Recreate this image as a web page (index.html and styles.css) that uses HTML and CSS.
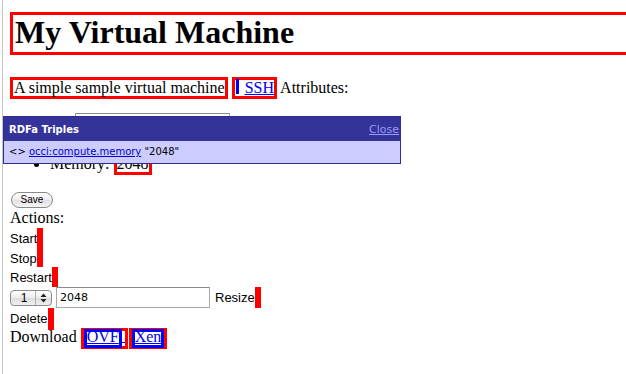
FILE: index.html
```html
<!DOCTYPE html>
<html lang="en">
<head>
<meta charset="utf-8">
<title>My Virtual Machine</title>
<link rel="stylesheet" href="styles.css">
</head>
<body>
<h1 class="title">My Virtual Machine</h1>
<div class="summary"><span class="box desc">A simple sample virtual machine</span> <span class="box ssh"><span class="rel-bar"></span><a href="#" class="link">SSH</a></span> Attributes:</div>
<ul class="attrs">
  <li class="input-row"><input class="text-input" type="text" value=""></li>
  <li class="mem">Memory: <span class="box mem-val">2048</span></li>
</ul>
<button class="save" type="button">Save</button>
<div class="actions-label">Actions:</div>
<div class="action"><span class="action-label">Start</span><span class="bar"></span></div>
<div class="action"><span class="action-label">Stop</span><span class="bar"></span></div>
<div class="action"><span class="action-label">Restart</span><span class="bar"></span></div>
<div class="action resize-row">
  <span class="select"><span class="select-val">1</span><span class="select-arrows"><svg width="7" height="10" viewBox="0 0 7 10"><path d="M3.5 0.5 L6.5 4 L0.5 4 Z" fill="#222"/><path d="M0.5 6 L6.5 6 L3.5 9.5 Z" fill="#222"/></svg></span></span>
  <input class="size-input" type="text" value="2048">
  <span class="action-label resize-label">Resize</span><span class="bar"></span>
</div>
<div class="action delete-row"><span class="action-label">Delete</span><span class="bar"></span></div>
<div class="download">Download <span class="box dl"><a href="#" class="rel-link">OVF</a><span class="trail"></span></span><span class="box dl xen"><a href="#" class="rel-link">Xen</a></span></div>

<div class="rdfa">
  <div class="rdfa-head"><span>RDFa Triples</span><a href="#" class="rdfa-close">Close</a></div>
  <div class="rdfa-body">&lt;&gt; <a href="#" class="rdfa-link">occi:compute.memory</a> "2048"</div>
</div>
</body>
</html>
```
FILE: styles.css
```css
html {
  overflow: hidden;
  background: #fff;
}

body {
  margin: 0 0 0 2px;
  padding: 0 0 0 7px;
  border-left: 1px solid #c4c4c4;
  min-height: 374px;
  position: relative;
  font-family: "Liberation Serif", "Times New Roman", serif;
  font-size: 16px;
  color: #000;
}

.title {
  margin: 12px -40px 0 0;
  padding: 0 2px 2px 2px;
  border: 3px solid #ff0000;
  font-size: 32px;
  font-weight: bold;
  line-height: 35px;
}

.summary {
  margin-top: 22px;
  height: 22px;
  line-height: 22px;
  white-space: nowrap;
}

.box {
  display: inline-block;
  border: 3px solid #ff0000;
  height: 16px;
  line-height: 16px;
}

.desc {
  padding: 0 0 0 1px;
}

.rel-bar {
  display: inline-block;
  width: 3px;
  height: 15px;
  background: #0000ff;
  vertical-align: top;
  margin: -1px 6px 0 1px;
}

.link,
.rel-link {
  color: #0000ee;
  text-decoration: underline;
}

.attrs {
  margin: 14px 0 0;
  padding-left: 40px;
}

.input-row {
  list-style: none;
  height: 40px;
}

.text-input {
  display: block;
  margin: 0 0 0 25px;
  box-sizing: border-box;
  width: 155px;
  height: 22px;
  border: 1px solid #a8a8a8;
  border-top-color: #8a8a8a;
}

.mem {
  height: 22px;
  line-height: 22px;
}

.save {
  display: block;
  margin: 17px 0 0 1px;
  box-sizing: border-box;
  width: 42px;
  height: 16px;
  padding: 0;
  border: 1px solid #8a8a8a;
  border-radius: 8px;
  background: linear-gradient(#ffffff, #ededed 50%, #e0e0e0 51%, #f6f6f6);
  font-family: "Liberation Sans", Arial, sans-serif;
  font-size: 10px;
  line-height: 14px;
  color: #000;
}

.actions-label {
  height: 20px;
  line-height: 20px;
}

.action {
  display: flex;
  height: 19.5px;
}

.action-label {
  font-family: "Liberation Sans", Arial, sans-serif;
  font-size: 13px;
  line-height: 15px;
  padding-top: 3px;
}

.bar {
  width: 6px;
  background: #ff0000;
}

.resize-row {
  height: 22px;
  align-items: center;
}

.select {
  display: flex;
  box-sizing: border-box;
  width: 42px;
  height: 16px;
  margin-right: 4px;
  border: 1px solid #8c8c8c;
  border-radius: 4px;
  background: linear-gradient(#fdfdfd, #ececec 50%, #dcdcdc 51%, #f0f0f0);
  font-family: "Liberation Sans", Arial, sans-serif;
  font-size: 12px;
  line-height: 14px;
}

.select-val {
  flex: 1;
  text-align: center;
  padding-left: 2px;
}

.select-arrows {
  width: 15px;
  border-left: 1px solid #b0b0b0;
  display: flex;
  align-items: center;
  justify-content: center;
}

.size-input {
  box-sizing: border-box;
  width: 154px;
  height: 21px;
  margin: 0;
  padding: 0 0 0 3px;
  border: 1px solid #a8a8a8;
  border-top-color: #8a8a8a;
  font-family: "DejaVu Sans", Verdana, sans-serif;
  font-size: 11px;
}

.resize-label {
  margin-left: 5px;
  padding-top: 0;
}

.resize-row .bar {
  height: 21px;
}

.delete-row {
  height: 22px;
  margin-top: -1px;
}

.download {
  margin-top: -2px;
  height: 21px;
  line-height: 17px;
  white-space: nowrap;
}

.dl {
  vertical-align: top;
  height: 15px;
  line-height: 15px;
}

.rel-link {
  display: inline-block;
  vertical-align: top;
  margin-top: -2px;
  border: 3px solid #0000ff;
  line-height: 9px;
  height: 9px;
  padding-bottom: 4px;
}

.trail {
  display: inline-block;
  vertical-align: top;
  width: 3px;
  height: 11px;
  border-bottom: 1px solid #0000ee;
}

.xen {
  margin-left: 1px;
}

.rdfa {
  position: absolute;
  left: 0;
  top: 116px;
  width: 398px;
  box-sizing: border-box;
  border: 1px solid #2d2d8f;
  font-family: "DejaVu Sans", Verdana, sans-serif;
  font-size: 10px;
}

.rdfa-head {
  height: 24px;
  display: flex;
  align-items: center;
  justify-content: space-between;
  padding: 0 1px 0 5px;
  background: #333399;
  color: #fff;
  font-weight: bold;
}

.rdfa-close {
  color: #9999ff;
  font-weight: normal;
  font-size: 11px;
  text-decoration: underline;
}

.rdfa-body {
  height: 22px;
  line-height: 22px;
  padding-left: 5px;
  background: #ccccff;
  color: #000;
}

.rdfa-link {
  color: #0000cc;
  text-decoration: underline;
}
```
